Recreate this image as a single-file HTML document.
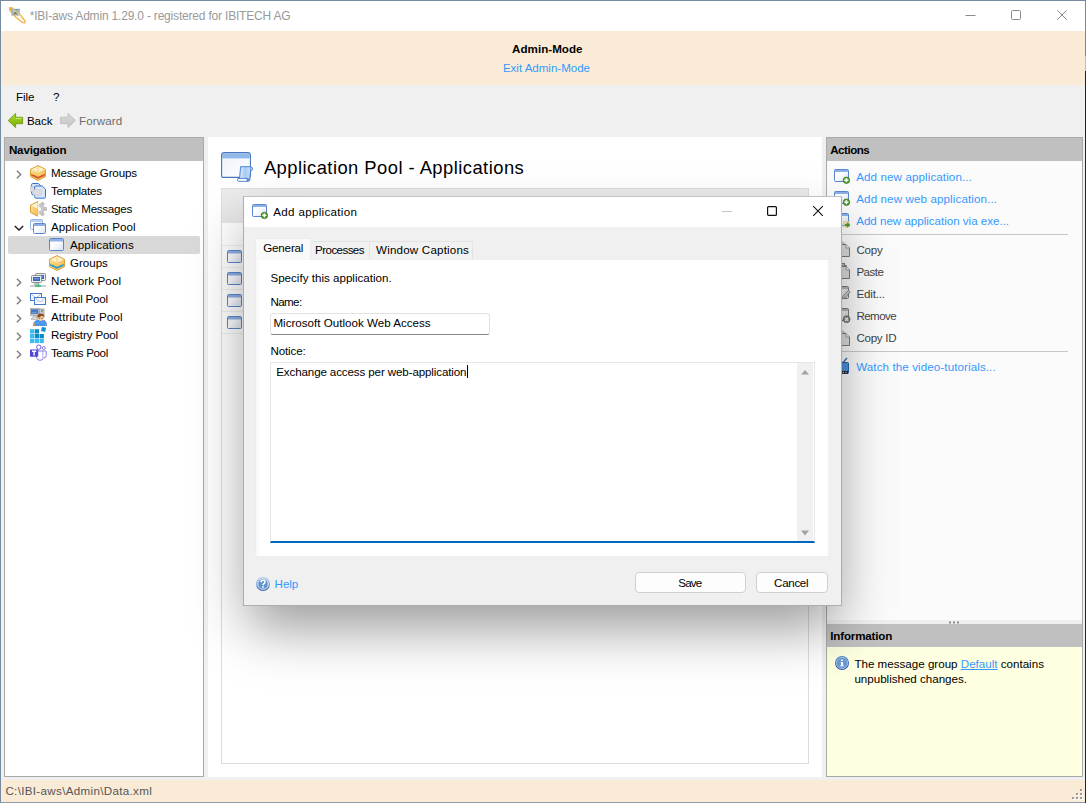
<!DOCTYPE html>
<html lang="en">
<head>
<meta charset="utf-8">
<title>IBI-aws Admin</title>
<style>
html,body{margin:0;padding:0;}
body{width:1086px;height:803px;position:relative;overflow:hidden;background:#f0f0f0;font-family:"Liberation Sans",sans-serif;}
.abs,.t,svg.i{position:absolute;}
.t{white-space:pre;display:block;}
#win{left:0;top:0;width:1086px;height:803px;background:#f0f0f0;box-sizing:border-box;border:1px solid #758ba2;border-bottom-color:#8f9aa6;}
#titlebar{left:1px;top:1px;width:1084px;height:30px;background:#fff;}
#banner{left:1px;top:31px;width:1084px;height:54px;background:#faebd7;}
#status{left:1px;top:780px;width:1084px;height:22px;background:#faebd7;}
.panel{box-sizing:border-box;border:1px solid #a9a9a9;background:#fff;}
.phead{background:#c0c0c0;}
#nav{left:4px;top:137px;width:200px;height:640px;}
#navhead{left:5px;top:138px;width:198px;height:23px;}
#navsel{left:8px;top:236px;width:192px;height:18px;background:#d9d9d9;border-radius:2px;}
#main{left:208px;top:137px;width:614px;height:640px;background:#fff;}
#list{left:221px;top:188px;width:588px;height:576px;box-sizing:border-box;border:1px solid #dcdcdc;background:#fff;}
#listhead{left:222px;top:189px;width:586px;height:34px;background:linear-gradient(#ececec,#e6e6e6);}
.rowline{left:222px;width:586px;height:1px;background:#efefef;}
#right{left:826px;top:137px;width:257px;height:640px;background:#fbfbfb;}
#acthead{left:827px;top:138px;width:255px;height:23px;}
#split{left:827px;top:620px;width:255px;height:4px;background:#f0f0f0;}
#infohead{left:827px;top:624px;width:255px;height:23px;}
#infobody{left:827px;top:647px;width:255px;height:129px;background:#ffffe1;}
.sep{height:1px;background:#c8c8c8;left:834px;width:234px;}
/* dialog */
#dlg{left:243px;top:196px;width:599px;height:410px;box-sizing:border-box;border:1px solid #adadad;border-top-color:#c2c2c2;background:#f0f0f0;z-index:10;
 box-shadow:0 27px 52px -5px rgba(0,0,0,.40);}
#dlgtitle{left:244px;top:197px;width:597px;height:30px;background:#fff;z-index:11;}
.z{z-index:12;}
#tabsel{left:255px;top:238px;width:56px;height:22px;box-sizing:border-box;border:1px solid #ececec;border-bottom:none;background:#f9f9f9;border-radius:2px 2px 0 0;}
.tab{top:241px;height:18px;box-sizing:border-box;border:1px solid #e3e3e3;border-bottom:none;background:#f1f1f1;}
#tabpage{left:255px;top:259px;width:575px;height:298px;box-sizing:border-box;background:#f9f9f9;border:1px solid #ededed;}
#tabinner{left:259px;top:260px;width:568px;height:296px;background:#fff;}
#name{left:270px;top:313px;width:220px;height:22px;box-sizing:border-box;border:1px solid #e3e3e3;border-bottom:1px solid #868686;border-radius:3px;background:#fff;}
#notice{left:270px;top:362px;width:545px;height:181px;box-sizing:border-box;border:1px solid #e6e6e6;border-bottom:2px solid #0067c0;background:#fff;}
#sb{left:797px;top:363px;width:16px;height:178px;background:#f0f0f0;}
.btn{top:572px;height:21px;box-sizing:border-box;border:1px solid #d0d0d0;border-radius:4px;background:#fdfdfd;}
#caret{left:467px;top:365px;width:1px;height:13px;background:#000;}
#dlgtext .t, #dlgtext{z-index:13;}
</style>
</head>
<body>
<div id="win" class="abs"></div>
<div id="titlebar" class="abs"></div>
<div class="abs" style="left:1085px;top:56px;width:1px;height:15px;background:#b9bcc0"></div>
<div class="abs" style="left:1085px;top:71px;width:1px;height:732px;background:#242424"></div>
<div id="banner" class="abs"></div>
<div id="status" class="abs"></div>

<div id="nav" class="abs panel"></div>
<div id="navhead" class="abs phead"></div>
<div id="navsel" class="abs"></div>

<div id="main" class="abs"></div>
<div id="list" class="abs"></div>
<div id="listhead" class="abs"></div>
<div class="abs rowline" style="top:245px"></div>
<div class="abs rowline" style="top:267px"></div>
<div class="abs rowline" style="top:289px"></div>
<div class="abs rowline" style="top:311px"></div>
<div class="abs rowline" style="top:333px"></div>

<div id="right" class="abs panel"></div>
<div id="acthead" class="abs phead"></div>
<div id="split" class="abs"></div>
<div id="infohead" class="abs phead"></div>
<div id="infobody" class="abs"></div>
<div class="abs sep" style="top:234px"></div>
<div class="abs sep" style="top:351px"></div>

<svg width="0" height="0" style="position:absolute"><defs>
<linearGradient id="gGreen" x1="0" y1="0" x2="0" y2="1"><stop offset="0" stop-color="#b5dc3a"/><stop offset=".5" stop-color="#8fc414"/><stop offset="1" stop-color="#79ae08"/></linearGradient>
<linearGradient id="gGray" x1="0" y1="0" x2="0" y2="1"><stop offset="0" stop-color="#dcdcdc"/><stop offset="1" stop-color="#c2c2c2"/></linearGradient>
<linearGradient id="gWin" x1="0" y1="0" x2="1" y2="1"><stop offset="0" stop-color="#ffffff"/><stop offset=".45" stop-color="#fbfcfe"/><stop offset="1" stop-color="#d9e1f0"/></linearGradient>
<linearGradient id="gWinG" x1="0" y1="0" x2="1" y2="1"><stop offset="0" stop-color="#ffffff"/><stop offset="1" stop-color="#d8d8d8"/></linearGradient>
<linearGradient id="gBoxL" x1="0" y1="0" x2="1" y2="1"><stop offset="0" stop-color="#fbe3a4"/><stop offset="1" stop-color="#f2b94a"/></linearGradient>
<linearGradient id="gBoxR" x1="0" y1="0" x2="1" y2="1"><stop offset="0" stop-color="#f9d98a"/><stop offset="1" stop-color="#eeb040"/></linearGradient>
<linearGradient id="gInfo" x1="0" y1="0" x2="0" y2="1"><stop offset="0" stop-color="#4a86d2"/><stop offset="1" stop-color="#2a4f9f"/></linearGradient>
<linearGradient id="gHelp" x1="0" y1="0" x2="0" y2="1"><stop offset="0" stop-color="#b4d0f2"/><stop offset=".55" stop-color="#7aa4da"/><stop offset="1" stop-color="#3565ac"/></linearGradient>
<linearGradient id="gScroll" x1="0" y1="0" x2="1" y2="0"><stop offset="0" stop-color="#e4effc"/><stop offset=".5" stop-color="#a9caf3"/><stop offset="1" stop-color="#cfe1f8"/></linearGradient>
<linearGradient id="gBig" x1="0" y1="0" x2="1" y2="1"><stop offset="0" stop-color="#e9eef8"/><stop offset=".6" stop-color="#f8fafd"/><stop offset="1" stop-color="#ffffff"/></linearGradient>
<radialGradient id="gPlus" cx=".4" cy=".35" r=".7"><stop offset="0" stop-color="#7cc04a"/><stop offset="1" stop-color="#3d8a1f"/></radialGradient>
</defs></svg>
<svg class="i" style="left:9px;top:7px;" width="17" height="17" viewBox="0 0 17 17"><g transform="rotate(44 8 8)"><ellipse cx="8" cy="8" rx="11" ry="2.400" fill="#fff8e8" stroke="#eeb24c" stroke-width="1.100"/></g><rect x="2.200" y="1.900" width="8.600" height="6.800" fill="#8eb0d2" fill-opacity=".85"/><rect x="2.200" y="1.900" width="8.600" height="1.200" fill="#6f93ba" fill-opacity=".8"/><path d="M5.200 7.600 L6.700 4.200 L8.300 7.600 M5.800 6.500 H7.700" fill="none" stroke="#7a6a18" stroke-width=".9"/><g transform="rotate(44 8 8)"><ellipse cx="8" cy="8" rx="11" ry="2.400" fill="none" stroke="#eeb24c" stroke-width="1" opacity=".6"/><path d="M-1 6.600 H12" stroke="#fff3d6" stroke-width=".9" opacity=".7"/></g><path d="M.3 .4 L3.400 1.600 L1.600 3.400 Z" fill="#e9a432"/></svg>
<svg class="i" style="left:7px;top:112px;" width="18" height="18" viewBox="0 0 18 18"><path d="M1.2 8.5 L8.6 1.4 V5.3 H15.6 V11.7 H8.6 V15.6 Z" fill="url(#gGreen)" stroke="#6d9d10" stroke-width=".9" stroke-linejoin="round"/><path d="M8.9 6.4 H14.6" stroke="#d6ee8a" stroke-width="1" opacity=".9"/></svg>
<svg class="i" style="left:59px;top:112px;" width="18" height="18" viewBox="0 0 18 18"><path d="M16.4 8.5 L9 1.4 V5.3 H1.6 V11.7 H9 V15.6 Z" fill="url(#gGray)" stroke="#bdbdbd" stroke-width=".9" stroke-linejoin="round"/></svg>
<svg class="i" style="left:16px;top:170px;" width="6" height="9" viewBox="0 0 6 9"><path d="M.9 .7 L4.7 4.5 L.9 8.3" fill="none" stroke="#7d7d7d" stroke-width="1.4"/></svg>
<svg class="i" style="left:16px;top:278px;" width="6" height="9" viewBox="0 0 6 9"><path d="M.9 .7 L4.7 4.5 L.9 8.3" fill="none" stroke="#7d7d7d" stroke-width="1.4"/></svg>
<svg class="i" style="left:16px;top:296px;" width="6" height="9" viewBox="0 0 6 9"><path d="M.9 .7 L4.7 4.5 L.9 8.3" fill="none" stroke="#7d7d7d" stroke-width="1.4"/></svg>
<svg class="i" style="left:16px;top:314px;" width="6" height="9" viewBox="0 0 6 9"><path d="M.9 .7 L4.7 4.5 L.9 8.3" fill="none" stroke="#7d7d7d" stroke-width="1.4"/></svg>
<svg class="i" style="left:16px;top:332px;" width="6" height="9" viewBox="0 0 6 9"><path d="M.9 .7 L4.7 4.5 L.9 8.3" fill="none" stroke="#7d7d7d" stroke-width="1.4"/></svg>
<svg class="i" style="left:16px;top:350px;" width="6" height="9" viewBox="0 0 6 9"><path d="M.9 .7 L4.7 4.5 L.9 8.3" fill="none" stroke="#7d7d7d" stroke-width="1.4"/></svg>
<svg class="i" style="left:14px;top:225px;" width="10" height="6" viewBox="0 0 10 6"><path d="M.8 .9 L5 5 L9.2 .9" fill="none" stroke="#1e1e1e" stroke-width="1.4"/></svg>
<svg class="i" style="left:30px;top:165px;" width="16" height="16" viewBox="0 0 16 16"><path d="M8 .6 L15.4 4.3 V11.7 L8 15.4 L.6 11.7 V4.3 Z" fill="#f7cf72" stroke="#d29b2f" stroke-width="1" stroke-linejoin="round"/><path d="M8 1.3 L14.6 4.5 L8 7.8 L1.4 4.5 Z" fill="#fdf0c8"/><path d="M1.2 5 L8 8.3 V14.7 L1.2 11.4 Z" fill="url(#gBoxL)"/><path d="M14.8 5 L8 8.3 V14.7 L14.8 11.4 Z" fill="url(#gBoxR)"/><path d="M1.2 8.2 L3 9.6 L4.6 9.6 L6.2 11 L8 11.2 L9.8 11 L11.4 9.6 L13 9.6 L14.8 8.2 V10.4 L13 11.8 L11.4 11.9 L9.8 13.2 L8 13.5 L6.2 13.2 L4.6 11.9 L3 11.8 L1.2 10.4 Z" fill="#d8503a"/><path d="M1.2 7.4 L3 8.8 L4.6 8.8 L6.2 10.2 L8 10.4 L9.8 10.2 L11.4 8.8 L13 8.8 L14.8 7.4 V8.4 L13 9.8 L11.4 9.8 L9.8 11.2 L8 11.4 L6.2 11.2 L4.6 9.8 L3 9.8 L1.2 8.4 Z" fill="#f4d34a"/><path d="M8 1.6 V7.4" stroke="#f3c868" stroke-width=".8"/></svg>
<svg class="i" style="left:30px;top:183px;" width="17" height="17" viewBox="0 0 17 17"><path d="M2.6 0.5 H8.5 L10.7 2.7 V10.4 Q10.7 11.9 9.2 11.9 H3.1 Q1.6 11.9 1.6 10.4 V1.5 Q1.6 0.5 2.6 0.5 Z" fill="#d4e5fa" stroke="#3474cf" stroke-width="1"/><path d="M3.1 2 H7.5 V9.9 H3.1 Z" fill="#eaf2fd" opacity=".7"/><path d="M0.8 3.4 H4.0 Q4.8 3.4 4.8 4.2 V7.8 Q4.8 8.6 4.0 8.6 H0.8 Q0 8.6 0 7.8 V4.2 Q0 3.4 0.8 3.4 Z" fill="#dcdcdc" stroke="#c4c4c4" stroke-width=".5"/><path d="M5.6 3.0 H12.3 L15.5 6.2 V13.7 Q15.5 15.2 14.0 15.2 H6.1 Q4.6 15.2 4.6 13.7 V4.0 Q4.6 3.0 5.6 3.0 Z" fill="#d4e5fa" stroke="#3474cf" stroke-width="1"/><path d="M6.1 4.5 H11.3 V13.2 H6.1 Z" fill="#eaf2fd" opacity=".7"/><path d="M4.2 6.5 H10.7 Q11.5 6.5 11.5 7.3 V11.399999999999999 Q11.5 12.2 10.7 12.2 H8.421999999999999 V14.0 L6.621999999999999 12.2 H4.2 Q3.4 12.2 3.4 11.399999999999999 V7.3 Q3.4 6.5 4.2 6.5 Z" fill="#dcdcdc" stroke="#c4c4c4" stroke-width=".5"/></svg>
<svg class="i" style="left:30px;top:201px;" width="17" height="17" viewBox="0 0 17 17"><rect x="8" y=".8" width="3" height="3.400" rx=".5" fill="#c9c9c9" stroke="#9c9c9c" stroke-width=".5" transform="rotate(30 9.500 8)"/><rect x="8" y=".8" width="3" height="3.400" rx=".5" fill="#c9c9c9" stroke="#9c9c9c" stroke-width=".5" transform="rotate(90 9.500 8)"/><rect x="8" y=".8" width="3" height="3.400" rx=".5" fill="#c9c9c9" stroke="#9c9c9c" stroke-width=".5" transform="rotate(150 9.500 8)"/><rect x="8" y=".8" width="3" height="3.400" rx=".5" fill="#c9c9c9" stroke="#9c9c9c" stroke-width=".5" transform="rotate(210 9.500 8)"/><rect x="8" y=".8" width="3" height="3.400" rx=".5" fill="#c9c9c9" stroke="#9c9c9c" stroke-width=".5" transform="rotate(270 9.500 8)"/><rect x="8" y=".8" width="3" height="3.400" rx=".5" fill="#c9c9c9" stroke="#9c9c9c" stroke-width=".5" transform="rotate(330 9.500 8)"/><circle cx="9.500" cy="8" r="4.800" fill="#cdcdcd" stroke="#a6a6a6" stroke-width=".5"/><circle cx="9.500" cy="8" r="2.300" fill="#fff" stroke="#9a9a9a" stroke-width=".5"/><path d="M7.900 .5 L.5 4.200 V11.400 L7.900 15.200 Z" fill="url(#gBoxL)" stroke="#d7a238" stroke-linejoin="round"/><path d="M7.500 1.400 L1.300 4.500 L7.500 7.800 Z" fill="#fdf2d0"/><path d="M8.300 1 V15" stroke="#fff" stroke-width="1" opacity=".9"/></svg>
<svg class="i" style="left:30px;top:219px;" width="16" height="16" viewBox="0 0 16 16"><g><g opacity="0.9"><rect x=".5" y=".5" width="12" height="10" rx="1" fill="url(#gWin)" stroke="#8fb0e0"/><path d="M1 1 Q1 1 1 1 H12 Q12 1 12 1 V3 H1 Z" fill="#b5cdf0"/></g></g><g transform="translate(3,4)"><g opacity="1"><rect x=".5" y=".5" width="12" height="10" rx="1" fill="url(#gWin)" stroke="#5c86cc"/><path d="M1 1 Q1 1 1 1 H12 Q12 1 12 1 V3 H1 Z" fill="#8db0e6"/></g></g></svg>
<svg class="i" style="left:49px;top:238px;" width="15" height="13" viewBox="0 0 15 13"><g opacity="1"><rect x=".5" y=".5" width="14" height="12" rx="1" fill="url(#gWin)" stroke="#5c86cc"/><path d="M1 1 Q1 1 1 1 H14 Q14 1 14 1 V3.4 H1 Z" fill="#8db0e6"/></g></svg>
<svg class="i" style="left:49px;top:255px;" width="16" height="16" viewBox="0 0 16 16"><path d="M8 .6 L15.4 4.3 V11.7 L8 15.4 L.6 11.7 V4.3 Z" fill="#f7cf72" stroke="#d29b2f" stroke-width="1" stroke-linejoin="round"/><path d="M8 1.3 L14.6 4.5 L8 7.8 L1.4 4.5 Z" fill="#fdf0c8"/><path d="M1.2 5 L8 8.3 V14.7 L1.2 11.4 Z" fill="url(#gBoxL)"/><path d="M14.8 5 L8 8.3 V14.7 L14.8 11.4 Z" fill="url(#gBoxR)"/><path d="M1.2 8.2 L3 9.6 L4.6 9.6 L6.2 11 L8 11.2 L9.8 11 L11.4 9.6 L13 9.6 L14.8 8.2 V10.4 L13 11.8 L11.4 11.9 L9.8 13.2 L8 13.5 L6.2 13.2 L4.6 11.9 L3 11.8 L1.2 10.4 Z" fill="#2f9ad8"/><path d="M1.2 7.4 L3 8.8 L4.6 8.8 L6.2 10.2 L8 10.4 L9.8 10.2 L11.4 8.8 L13 8.8 L14.8 7.4 V8.4 L13 9.8 L11.4 9.8 L9.8 11.2 L8 11.4 L6.2 11.2 L4.6 9.8 L3 9.8 L1.2 8.4 Z" fill="#f4d34a"/><path d="M8 1.6 V7.4" stroke="#f3c868" stroke-width=".8"/></svg>
<svg class="i" style="left:30px;top:272px;" width="17" height="16" viewBox="0 0 17 16"><rect x="5.5" y="1.5" width="10" height="7" rx="1" fill="#ececec" stroke="#8e8e8e"/><rect x="7" y="3" width="7" height="4" fill="#3768b8"/><rect x="8" y="4" width="5" height="1.400" fill="#6b95d6"/><rect x="1.5" y="3.5" width="10" height="7" rx="1" fill="#ececec" stroke="#8e8e8e"/><rect x="3" y="5" width="7" height="4" fill="#3768b8"/><rect x="4" y="6" width="5" height="1.400" fill="#6b95d6"/><path d="M5 11 H8 L9 12.500 H4 Z" fill="#d0d0d0" stroke="#9a9a9a" stroke-width=".5"/><rect x="0" y="13.200" width="16" height="1.700" fill="#c3cbc9"/><rect x="5" y="13.200" width="6" height="1.700" fill="#3fba7a"/><path d="M8.500 11 L7.300 13.300 H9.700 Z" fill="#3fba7a"/></svg>
<svg class="i" style="left:30px;top:293px;" width="16" height="12" viewBox="0 0 16 12"><rect x="0.5" y="0.5" width="11" height="7" fill="#fff" stroke="#477bc9"/><path d="M1.5 1.5 L6 5 L10.5 1.5" fill="none" stroke="#8fb2e6" stroke-width=".9"/><path d="M1.5 6.5 L4.5 3.8 M10.5 6.5 L7.5 3.8" stroke="#b9d0f0" stroke-width=".7"/><rect x="4.5" y="4.5" width="11" height="7" fill="#fff" stroke="#477bc9"/><path d="M5.5 5.5 L10 9 L14.5 5.5" fill="none" stroke="#8fb2e6" stroke-width=".9"/><path d="M5.5 10.5 L8.5 7.8 M14.5 10.5 L11.5 7.8" stroke="#b9d0f0" stroke-width=".7"/></svg>
<svg class="i" style="left:30px;top:308px;" width="17" height="18" viewBox="0 0 17 18"><rect x="9.500" y="1" width="4.500" height="7.500" fill="#cfcfcf" stroke="#8c8c8c" stroke-width=".7"/><rect x="11" y="2" width="1.500" height="1.800" fill="#2fa84a"/><rect x=".4" y=".6" width="8.600" height="7" fill="#e4e4e4" stroke="#9b9b9b" stroke-width=".7"/><rect x="1" y="1.200" width="7.400" height="5" fill="#4a78c2"/><rect x="1.800" y="4.300" width="5" height=".8" fill="#86a8de"/><path d="M3 8 H6.500 V10 H8 V11.500 H1.500 V10 H3 Z" fill="#d9d9d9" stroke="#9a9a9a" stroke-width=".5"/><path d="M3.600 17.500 Q3.800 12.500 8 12.300 H13.400 Q16.300 12.600 16.500 17.500 Z" fill="#3b8eec" stroke="#1f4fae" stroke-width=".8" stroke-dasharray="1.200 .7"/><path d="M3.800 17.500 Q4 13 8 12.800 H13.200 Q16 13 16.200 17.500 Z" fill="#4a9af2"/><rect x="3.300" y="15.400" width="1.700" height="2.300" fill="#ee8a1e"/><circle cx="10.800" cy="9.600" r="3.300" fill="#f6cfa6"/><path d="M7.200 9.800 Q7 5.600 10.800 5.600 Q14.600 5.600 14.400 9.800 Q13.200 8 12 7.800 Q9.500 9.200 7.200 9.800 Z" fill="#8a4a1c"/><rect x="9.300" y="9.600" width=".9" height="1.200" fill="#3a2a1c"/><rect x="11.600" y="9.600" width=".9" height="1.200" fill="#3a2a1c"/></svg>
<svg class="i" style="left:30px;top:327px;" width="17" height="17" viewBox="0 0 17 17"><rect x="0.0" y="2.2" width="4.300" height="4.300" fill="#3cbbee"/><rect x="4.8" y="2.2" width="4.300" height="4.300" fill="#0a8ac6"/><rect x="0.0" y="7.0" width="4.300" height="4.300" fill="#3cbbee"/><rect x="4.8" y="7.0" width="4.300" height="4.300" fill="#0a8ac6"/><rect x="9.6" y="7.0" width="4.300" height="4.300" fill="#0a8ac6"/><rect x="0.0" y="11.8" width="4.300" height="4.300" fill="#3cbbee"/><rect x="4.8" y="11.8" width="4.300" height="4.300" fill="#3cbbee"/><rect x="9.6" y="11.8" width="4.300" height="4.300" fill="#3cbbee"/><rect x="11.400" y=".3" width="4.300" height="4.300" fill="#0f92cc" transform="rotate(12 13.5 2.400)"/></svg>
<svg class="i" style="left:30px;top:344px;" width="17" height="17" viewBox="0 0 17 17"><circle cx="8.800" cy="3.200" r="2.200" fill="#fff" stroke="#5b4bd8" stroke-width=".9"/><circle cx="13.700" cy="4" r="1.500" fill="#fff" stroke="#6a5be0" stroke-width=".8"/><path d="M6.500 7 H15.600 Q16.200 7 16.200 7.700 V11.500 Q16 14 13.500 14 Q13 16.300 10 16.300 Q7 16.300 6.500 13.500 Z" fill="#fff" stroke="#6a5be0" stroke-width=".8"/><path d="M12.800 7.300 V13.800" stroke="#8f84e8" stroke-width=".7"/><rect x="0" y="5.400" width="8.200" height="7.400" rx=".8" fill="#4f46d6"/><path d="M2 7.300 H6.200 M4.100 7.300 V11.400" stroke="#fff" stroke-width="1.400"/></svg>
<svg class="i" style="left:221px;top:152px;" width="33" height="31" viewBox="0 0 33 31"><path d="M.6 3.200 Q.6 .6 3.200 .6 H26.800 Q29.400 .6 29.400 3.200 V24 Q29.400 25.400 28 25.400 H2 Q.6 25.400 .6 24 Z" fill="url(#gBig)" stroke="#4876be" stroke-width="1.100"/><path d="M1.200 3.300 Q1.200 1.200 3.300 1.200 H26.700 Q28.800 1.200 28.800 3.300 V6.200 H1.200 Z" fill="#92b7e9"/><path d="M1.200 6.500 H28.800" stroke="#c8dbf4" stroke-width=".7"/><g transform="translate(16,14)"><path d="M13.200 .9 Q15.800 .9 15.600 3.200 Q15.300 5 13.500 4.600" fill="#eaf2fd" stroke="#3e7acb" stroke-width=".9"/><path d="M3.600 .7 H13.400 Q14.300 1.600 13.700 3.400 L12.700 14.400 H2.400 Z" fill="url(#gScroll)" stroke="#3e7acb" stroke-width=".9" stroke-linejoin="round"/><path d="M1 12.400 H10.300 V15.300 H2 Q.3 15.300 .4 13.600 Q.4 12.400 1.400 12.400" fill="#fff" stroke="#3e7acb" stroke-width=".9" stroke-linejoin="round"/><path d="M10.300 12.400 Q12.800 12.300 12.700 14.400 Q12.400 15.500 10.300 15.300 Z" fill="#6fa0e0" stroke="#3e7acb" stroke-width=".7"/></g></svg>
<svg class="i" style="left:227px;top:250px;" width="15" height="13" viewBox="0 0 15 13"><g opacity="1"><rect x=".5" y=".5" width="14" height="12" rx="1" fill="url(#gWin)" stroke="#5c86cc"/><path d="M1 1 Q1 1 1 1 H14 Q14 1 14 1 V3.4 H1 Z" fill="#8db0e6"/></g></svg>
<svg class="i" style="left:227px;top:272px;" width="15" height="13" viewBox="0 0 15 13"><g opacity="1"><rect x=".5" y=".5" width="14" height="12" rx="1" fill="url(#gWin)" stroke="#5c86cc"/><path d="M1 1 Q1 1 1 1 H14 Q14 1 14 1 V3.4 H1 Z" fill="#8db0e6"/></g></svg>
<svg class="i" style="left:227px;top:294px;" width="15" height="13" viewBox="0 0 15 13"><g opacity="1"><rect x=".5" y=".5" width="14" height="12" rx="1" fill="url(#gWin)" stroke="#5c86cc"/><path d="M1 1 Q1 1 1 1 H14 Q14 1 14 1 V3.4 H1 Z" fill="#8db0e6"/></g></svg>
<svg class="i" style="left:227px;top:316px;" width="15" height="13" viewBox="0 0 15 13"><g opacity="1"><rect x=".5" y=".5" width="14" height="12" rx="1" fill="url(#gWin)" stroke="#5c86cc"/><path d="M1 1 Q1 1 1 1 H14 Q14 1 14 1 V3.4 H1 Z" fill="#8db0e6"/></g></svg>
<svg class="i" style="left:834px;top:169px;" width="17" height="16" viewBox="0 0 17 16"><g opacity="1"><rect x=".5" y=".5" width="14" height="12" rx="1" fill="url(#gWin)" stroke="#5c86cc"/><path d="M1 1 Q1 1 1 1 H14 Q14 1 14 1 V3 H1 Z" fill="#8db0e6"/></g><circle cx="12.4" cy="11.2" r="3.2" fill="url(#gPlus)" stroke="#357a1b" stroke-width=".8"/><path d="M10.4 11.2 H14.4 M12.4 9.2 V13.2" stroke="#fff" stroke-width="1.4"/></svg>
<svg class="i" style="left:834px;top:191px;" width="17" height="16" viewBox="0 0 17 16"><g opacity="1"><rect x=".5" y=".5" width="14" height="12" rx="1" fill="url(#gWin)" stroke="#5c86cc"/><path d="M1 1 Q1 1 1 1 H14 Q14 1 14 1 V3 H1 Z" fill="#8db0e6"/></g><circle cx="12.4" cy="11.2" r="3.2" fill="url(#gPlus)" stroke="#357a1b" stroke-width=".8"/><path d="M10.4 11.2 H14.4 M12.4 9.2 V13.2" stroke="#fff" stroke-width="1.4"/></svg>
<svg class="i" style="left:834px;top:213px;" width="17" height="16" viewBox="0 0 17 16"><g opacity="1"><rect x=".5" y=".5" width="14" height="12" rx="1" fill="url(#gWin)" stroke="#5c86cc"/><path d="M1 1 Q1 1 1 1 H14 Q14 1 14 1 V3 H1 Z" fill="#8db0e6"/></g><path d="M9.500 8.500 H15.500 V14 H9.500 Z" fill="#f8e6a8" stroke="#e2c474" stroke-width=".6" opacity=".85"/><path d="M11 11.300 H13.300 V9.800 L16 12 L13.300 14.300 V12.800 H11 Z" fill="#4aa52e" stroke="#2f7d1c" stroke-width=".5"/></svg>
<svg class="i" style="left:834px;top:241px;" width="16" height="16" viewBox="0 0 16 16"><path d="M3.500 .5 H8 L11.500 4 V6 H3.500 Z" fill="#e6e6e6" stroke="#8a8a8a"/><path d="M5.500 3.500 H12 L15.500 7 V15.500 H5.500 Z" fill="#dcdcdc" stroke="#7c7c7c"/><path d="M12 3.500 V7 H15.500" fill="#f2f2f2" stroke="#8c8c8c" stroke-width=".8"/></svg>
<svg class="i" style="left:834px;top:263px;" width="16" height="16" viewBox="0 0 16 16"><path d="M4.500 2.500 H12.500 V6 H4.500 Z" fill="#cfcfcf" stroke="#808080"/><rect x="7" y=".5" width="3.500" height="2.500" fill="#bdbdbd" stroke="#808080"/><path d="M5.500 3.500 H12 L15.500 7 V15.500 H5.500 Z" fill="#dcdcdc" stroke="#7c7c7c"/><path d="M12 3.500 V7 H15.500" fill="#f2f2f2" stroke="#8c8c8c" stroke-width=".8"/></svg>
<svg class="i" style="left:834px;top:286px;" width="17" height="15" viewBox="0 0 17 15"><g opacity="1"><rect x=".5" y=".5" width="14" height="12" rx="1" fill="url(#gWinG)" stroke="#7e7e7e"/><path d="M1 1 Q1 1 1 1 H14 Q14 1 14 1 V3 H1 Z" fill="#b3b3b3"/></g><path d="M8.200 12.800 L9 10.200 L14.400 4.400 L16.200 6 L10.800 12 Z" fill="#d0d0d0" stroke="#7a7a7a" stroke-width=".8"/></svg>
<svg class="i" style="left:834px;top:308px;" width="17" height="16" viewBox="0 0 17 16"><g opacity="1"><rect x=".5" y=".5" width="14" height="12" rx="1" fill="url(#gWinG)" stroke="#7e7e7e"/><path d="M1 1 Q1 1 1 1 H14 Q14 1 14 1 V3 H1 Z" fill="#b3b3b3"/></g><circle cx="12.600" cy="11.200" r="3.400" fill="#8a8a8a" stroke="#5c5c5c" stroke-width=".8"/><path d="M11 9.600 L14.200 12.800 M14.200 9.600 L11 12.800" stroke="#fff" stroke-width="1.100"/></svg>
<svg class="i" style="left:834px;top:330px;" width="16" height="16" viewBox="0 0 16 16"><path d="M3.500 .5 H8 L11.500 4 V6 H3.500 Z" fill="#e6e6e6" stroke="#8a8a8a"/><path d="M5.500 3.500 H12 L15.500 7 V15.500 H5.500 Z" fill="#dcdcdc" stroke="#7c7c7c"/><path d="M12 3.500 V7 H15.500" fill="#f2f2f2" stroke="#8c8c8c" stroke-width=".8"/></svg>
<svg class="i" style="left:834px;top:357px;" width="16" height="18" viewBox="0 0 16 18"><path d="M13 1 L9 5.500" stroke="#2f62aa" stroke-width="1.200"/><path d="M4 1.500 L8 5.500" stroke="#2f62aa" stroke-width="1.200"/><rect x="1.500" y="5.500" width="13" height="11" rx="1" fill="#4c92dc" stroke="#2b5ea6"/><rect x="2" y="14" width="12" height="2.600" fill="#1e1e1e"/><path d="M3.500 15.300 H13" stroke="#e8e8e8" stroke-width="1" stroke-dasharray="1.300 1.300"/></svg>
<svg class="i" style="left:834px;top:655px;" width="16" height="16" viewBox="0 0 16 16"><circle cx="8" cy="8" r="7" fill="url(#gInfo)"/><circle cx="8" cy="8" r="5.700" fill="#6c9bd2" stroke="#a9c6ea" stroke-width=".9"/><rect x="7" y="4.600" width="2" height="1.300" fill="#fff"/><path d="M6.800 6.900 H9 V10.400 H10 V11.300 H6 V10.400 H7.100 V7.800 H6.800 Z" fill="#fff"/></svg>
<svg class="i" style="left:949px;top:621px;" width="12" height="3" viewBox="0 0 12 3"><rect x="0" y=".5" width="2" height="2" fill="#8a8a8a"/><rect x="4" y=".5" width="2" height="2" fill="#8a8a8a"/><rect x="8" y=".5" width="2" height="2" fill="#8a8a8a"/></svg>
<svg class="i" style="left:1072px;top:789px;" width="12" height="12" viewBox="0 0 12 12"><rect x="9" y="1" width="2" height="2" fill="#fff"/><rect x="8" y="0" width="2" height="2" fill="#9a9a9a"/><rect x="5" y="5" width="2" height="2" fill="#fff"/><rect x="4" y="4" width="2" height="2" fill="#9a9a9a"/><rect x="9" y="5" width="2" height="2" fill="#fff"/><rect x="8" y="4" width="2" height="2" fill="#9a9a9a"/><rect x="1" y="9" width="2" height="2" fill="#fff"/><rect x="0" y="8" width="2" height="2" fill="#9a9a9a"/><rect x="5" y="9" width="2" height="2" fill="#fff"/><rect x="4" y="8" width="2" height="2" fill="#9a9a9a"/><rect x="9" y="9" width="2" height="2" fill="#fff"/><rect x="8" y="8" width="2" height="2" fill="#9a9a9a"/></svg>
<svg class="i" style="left:964px;top:9px;" width="14" height="14" viewBox="0 0 14 14"><path d="M1.500 6.500 H11.500" stroke="#8c8c8c" stroke-width="1"/></svg>
<svg class="i" style="left:1010px;top:9px;" width="14" height="14" viewBox="0 0 14 14"><rect x="1.500" y="1.500" width="9" height="9" rx="1" fill="none" stroke="#8c8c8c" stroke-width="1"/></svg>
<svg class="i" style="left:1056px;top:9px;" width="14" height="14" viewBox="0 0 14 14"><path d="M1.300 1.300 L10.700 10.700 M10.700 1.300 L1.300 10.700" stroke="#8c8c8c" stroke-width="1"/></svg>
<div id="maintext">
<span class="t" style="left:29.70px;top:7.84px;font-size:12px;line-height:16px;letter-spacing:-0.191px;color:#999999;">*IBI-aws Admin 1.29.0 - registered for IBITECH AG</span>
<span class="t" style="left:512.12px;top:40.98px;font-size:11.6px;line-height:16px;letter-spacing:0.022px;color:#000;font-weight:700;">Admin-Mode</span>
<span class="t" style="left:502.92px;top:59.98px;font-size:11.6px;line-height:16px;letter-spacing:-0.035px;color:#3399ff;">Exit Admin-Mode</span>
<span class="t" style="left:15.92px;top:88.98px;font-size:11.6px;line-height:16px;letter-spacing:-0.041px;color:#000;">File</span>
<span class="t" style="left:52.92px;top:88.98px;font-size:11.6px;line-height:16px;letter-spacing:-0.931px;color:#000;">?</span>
<span class="t" style="left:26.92px;top:112.98px;font-size:11.6px;line-height:16px;letter-spacing:-0.065px;color:#000;">Back</span>
<span class="t" style="left:78.92px;top:112.98px;font-size:11.6px;line-height:16px;letter-spacing:0.142px;color:#6d6d6d;">Forward</span>
<span class="t" style="left:8.92px;top:141.98px;font-size:11.6px;line-height:16px;letter-spacing:-0.174px;color:#000;font-weight:700;">Navigation</span>
<span class="t" style="left:50.92px;top:164.98px;font-size:11.6px;line-height:16px;letter-spacing:-0.170px;color:#000;">Message Groups</span>
<span class="t" style="left:50.92px;top:182.98px;font-size:11.6px;line-height:16px;letter-spacing:-0.214px;color:#000;">Templates</span>
<span class="t" style="left:50.92px;top:200.98px;font-size:11.6px;line-height:16px;letter-spacing:-0.269px;color:#000;">Static Messages</span>
<span class="t" style="left:50.92px;top:218.98px;font-size:11.6px;line-height:16px;letter-spacing:0.110px;color:#000;">Application Pool</span>
<span class="t" style="left:69.92px;top:236.98px;font-size:11.6px;line-height:16px;letter-spacing:0.117px;color:#000;">Applications</span>
<span class="t" style="left:69.92px;top:254.98px;font-size:11.6px;line-height:16px;letter-spacing:-0.002px;color:#000;">Groups</span>
<span class="t" style="left:50.92px;top:272.98px;font-size:11.6px;line-height:16px;letter-spacing:0.106px;color:#000;">Network Pool</span>
<span class="t" style="left:50.92px;top:290.98px;font-size:11.6px;line-height:16px;letter-spacing:-0.205px;color:#000;">E-mail Pool</span>
<span class="t" style="left:50.92px;top:308.98px;font-size:11.6px;line-height:16px;letter-spacing:0.165px;color:#000;">Attribute Pool</span>
<span class="t" style="left:50.92px;top:326.98px;font-size:11.6px;line-height:16px;letter-spacing:-0.141px;color:#000;">Registry Pool</span>
<span class="t" style="left:50.92px;top:344.98px;font-size:11.6px;line-height:16px;letter-spacing:-0.356px;color:#000;">Teams Pool</span>
<span class="t" style="left:263.88px;top:154.62px;font-size:18.4px;line-height:26px;letter-spacing:0.450px;color:#000;">Application Pool - Applications</span>
<span class="t" style="left:830.22px;top:141.98px;font-size:11.6px;line-height:16px;letter-spacing:-0.499px;color:#000;font-weight:700;">Actions</span>
<span class="t" style="left:856.22px;top:168.98px;font-size:11.6px;line-height:16px;letter-spacing:0.104px;color:#3399ff;">Add new application...</span>
<span class="t" style="left:856.22px;top:190.98px;font-size:11.6px;line-height:16px;letter-spacing:0.115px;color:#3399ff;">Add new web application...</span>
<span class="t" style="left:856.22px;top:212.98px;font-size:11.6px;line-height:16px;letter-spacing:-0.019px;color:#3399ff;">Add new application via exe...</span>
<span class="t" style="left:856.42px;top:241.98px;font-size:11.6px;line-height:16px;letter-spacing:-0.239px;color:#444;">Copy</span>
<span class="t" style="left:856.42px;top:263.98px;font-size:11.6px;line-height:16px;letter-spacing:-0.547px;color:#444;">Paste</span>
<span class="t" style="left:856.42px;top:285.98px;font-size:11.6px;line-height:16px;letter-spacing:-0.162px;color:#444;">Edit...</span>
<span class="t" style="left:856.42px;top:307.98px;font-size:11.6px;line-height:16px;letter-spacing:-0.558px;color:#444;">Remove</span>
<span class="t" style="left:856.42px;top:329.98px;font-size:11.6px;line-height:16px;letter-spacing:-0.296px;color:#444;">Copy ID</span>
<span class="t" style="left:856.22px;top:358.98px;font-size:11.6px;line-height:16px;letter-spacing:0.096px;color:#3399ff;">Watch the video-tutorials...</span>
<span class="t" style="left:830.22px;top:627.98px;font-size:11.6px;line-height:16px;letter-spacing:-0.168px;color:#000;font-weight:700;">Information</span>
<span class="t" style="left:854.42px;top:655.98px;font-size:11.6px;line-height:16px;letter-spacing:0.001px;color:#000;">The message group <span style="color:#3399ff;text-decoration:underline">Default</span> contains</span>
<span class="t" style="left:854.42px;top:670.98px;font-size:11.6px;line-height:16px;letter-spacing:-0.015px;color:#000;">unpublished changes.</span>
<span class="t" style="left:5.42px;top:782.98px;font-size:11.6px;line-height:16px;letter-spacing:0.328px;color:#555;">C:\IBI-aws\Admin\Data.xml</span>
</div>

<div id="dlg" class="abs"></div>
<div id="dlgtitle" class="abs"></div>
<div id="tabpage" class="abs z"></div>
<div id="tabinner" class="abs z"></div>
<div class="abs tab z" style="left:310px;width:60px"></div>
<div class="abs tab z" style="left:369px;width:104px"></div>
<div id="tabsel" class="abs z"></div>
<div id="name" class="abs z"></div>
<div id="notice" class="abs z"></div>
<div id="sb" class="abs z"></div>
<div id="caret" class="abs z"></div>
<div class="abs btn z" style="left:635px;width:111px"></div>
<div class="abs btn z" style="left:756px;width:72px"></div>
<svg class="i" style="left:252px;top:204px;z-index:14;" width="17" height="16" viewBox="0 0 17 16"><g opacity="1"><rect x=".5" y=".5" width="14" height="12" rx="1" fill="url(#gWin)" stroke="#5c86cc"/><path d="M1 1 Q1 1 1 1 H14 Q14 1 14 1 V3 H1 Z" fill="#8db0e6"/></g><circle cx="12.4" cy="11.4" r="3.2" fill="url(#gPlus)" stroke="#357a1b" stroke-width=".8"/><path d="M10.4 11.4 H14.4 M12.4 9.4 V13.4" stroke="#fff" stroke-width="1.4"/></svg>
<svg class="i" style="left:721px;top:205px;z-index:14;" width="14" height="14" viewBox="0 0 14 14"><path d="M1 6.500 H11" stroke="#c4c4c4" stroke-width="1"/></svg>
<svg class="i" style="left:766px;top:205px;z-index:14;" width="14" height="14" viewBox="0 0 14 14"><rect x="1.600" y="1.600" width="8.800" height="8.800" rx="1" fill="none" stroke="#111" stroke-width="1.200"/></svg>
<svg class="i" style="left:812px;top:205px;z-index:14;" width="14" height="14" viewBox="0 0 14 14"><path d="M1.200 1.200 L10.800 10.800 M10.800 1.200 L1.200 10.800" stroke="#111" stroke-width="1.100"/></svg>
<svg class="i" style="left:255px;top:576px;z-index:14;" width="16" height="16" viewBox="0 0 16 16"><circle cx="8" cy="8" r="7" fill="url(#gHelp)"/><circle cx="8" cy="8" r="5.300" fill="#5f93ce" stroke="#dce8f7" stroke-width="1"/><path d="M6 6.300 Q6 4.300 8 4.300 Q10 4.300 10 6 Q10 7.200 8.900 7.700 Q8 8.100 8 9.200" fill="none" stroke="#fff" stroke-width="1.500"/><rect x="7.100" y="10.300" width="1.800" height="1.400" fill="#fff"/></svg>
<svg class="i" style="left:800px;top:368px;z-index:14;" width="10" height="8" viewBox="0 0 10 8"><path d="M1 6.500 L5 2 L9 6.500 Z" fill="#a3a3a3"/></svg>
<svg class="i" style="left:800px;top:529px;z-index:14;" width="10" height="8" viewBox="0 0 10 8"><path d="M1 1.500 L5 6.500 L9 1.500 Z" fill="#a3a3a3"/></svg>
<div id="dlgtext">
<span class="t" style="left:273.32px;top:203.98px;font-size:11.6px;line-height:16px;letter-spacing:0.308px;color:#000;">Add application</span>
<span class="t" style="left:263.22px;top:239.98px;font-size:11.6px;line-height:16px;letter-spacing:-0.175px;color:#000;">General</span>
<span class="t" style="left:315.12px;top:241.98px;font-size:11.6px;line-height:16px;letter-spacing:-0.589px;color:#000;">Processes</span>
<span class="t" style="left:376.12px;top:241.98px;font-size:11.6px;line-height:16px;letter-spacing:0.180px;color:#000;">Window Captions</span>
<span class="t" style="left:270.42px;top:269.98px;font-size:11.6px;line-height:16px;letter-spacing:0.006px;color:#000;">Specify this application.</span>
<span class="t" style="left:270.42px;top:293.98px;font-size:11.6px;line-height:16px;letter-spacing:-0.587px;color:#000;">Name:</span>
<span class="t" style="left:273.42px;top:314.98px;font-size:11.6px;line-height:16px;letter-spacing:0.007px;color:#000;">Microsoft Outlook Web Access</span>
<span class="t" style="left:270.42px;top:342.98px;font-size:11.6px;line-height:16px;letter-spacing:-0.110px;color:#000;">Notice:</span>
<span class="t" style="left:276.22px;top:363.98px;font-size:11.6px;line-height:16px;letter-spacing:-0.126px;color:#000;">Exchange access per web-application</span>
<span class="t" style="left:274.62px;top:575.98px;font-size:11.6px;line-height:16px;letter-spacing:-0.084px;color:#3399ff;">Help</span>
<span class="t" style="left:678.22px;top:574.98px;font-size:11.6px;line-height:16px;letter-spacing:-0.804px;color:#000;">Save</span>
<span class="t" style="left:774.12px;top:574.98px;font-size:11.6px;line-height:16px;letter-spacing:-0.329px;color:#000;">Cancel</span>
</div>
</body>
</html>
